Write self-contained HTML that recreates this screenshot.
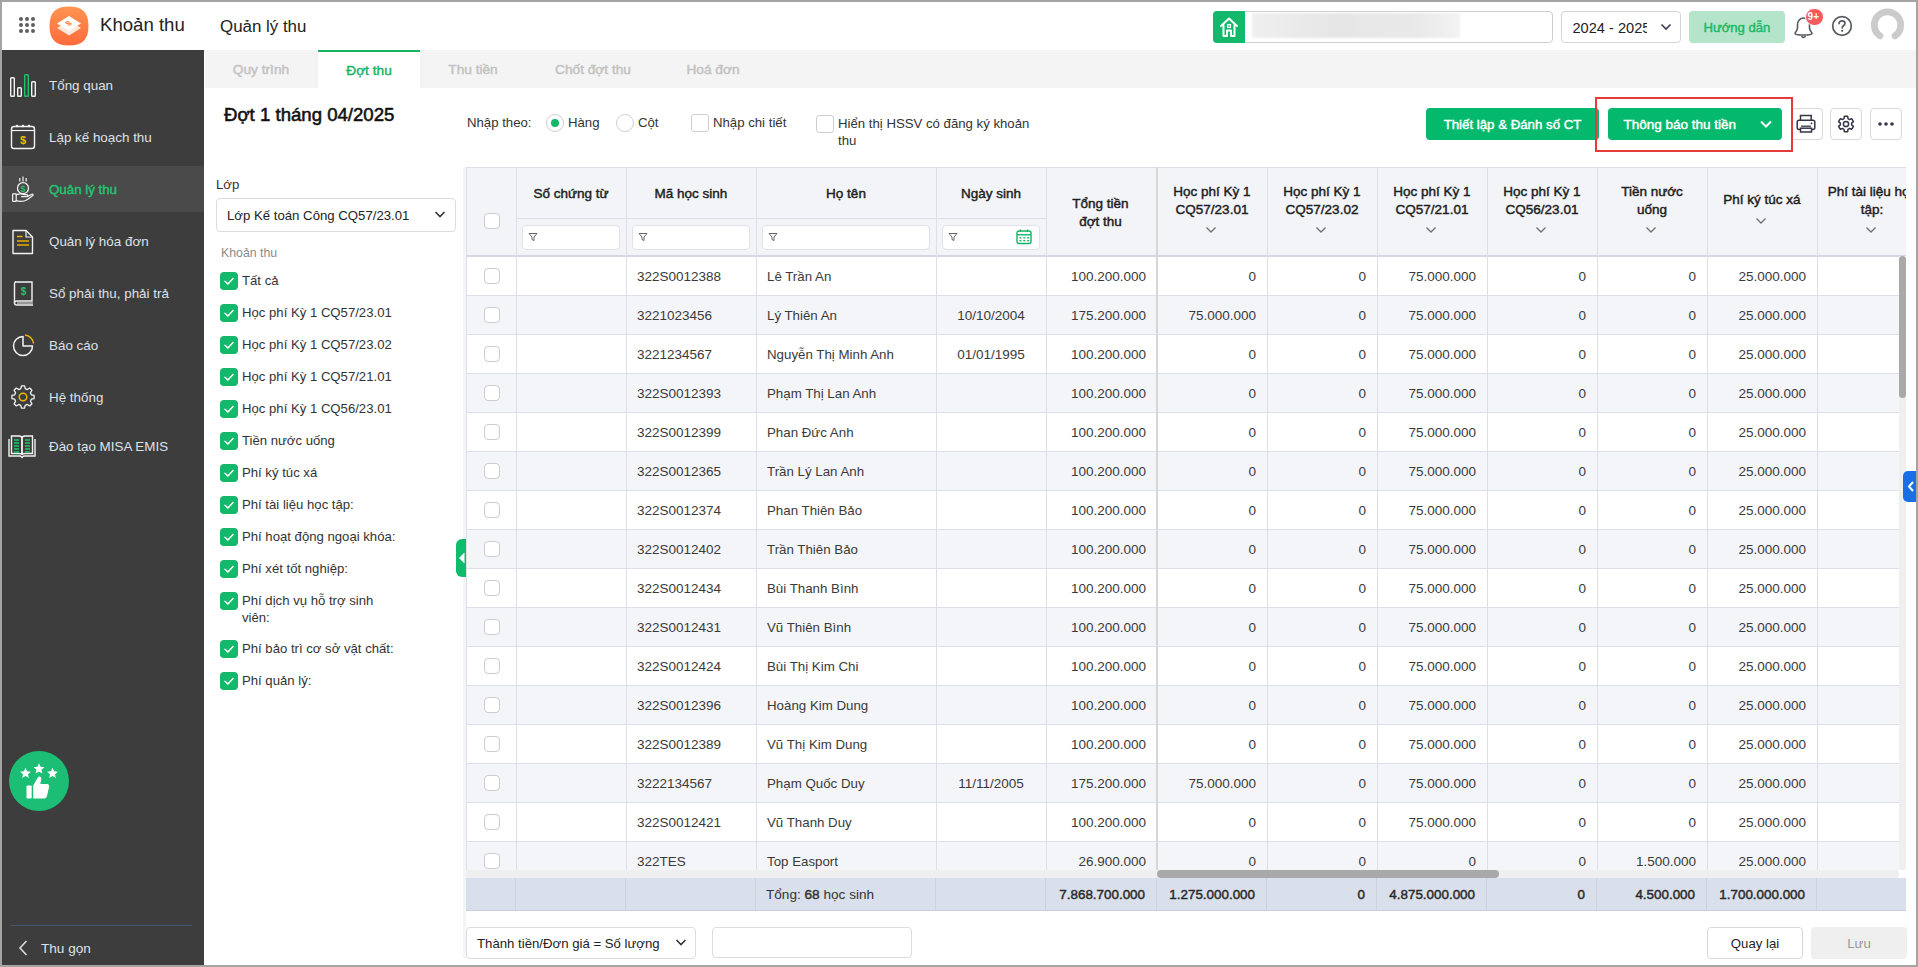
<!DOCTYPE html><html><head><meta charset="utf-8"><style>
*{box-sizing:border-box;margin:0;padding:0}
html,body{width:1918px;height:967px;overflow:hidden;background:#a4a4a4;font-family:"Liberation Sans",sans-serif;color:#212121}
.abs{position:absolute}
.t{position:absolute;white-space:nowrap;line-height:1}
.sb{font-weight:normal!important;-webkit-text-stroke-width:0.45px}
#app{position:absolute;left:2px;top:2px;width:1914px;height:963px;background:#fff;overflow:hidden}
</style></head><body>
<div id="app"></div>
<div class="abs" style="left:19px;top:17px;width:4px;height:4px;border-radius:50%;background:#5f5f5f"></div>
<div class="abs" style="left:19px;top:23px;width:4px;height:4px;border-radius:50%;background:#5f5f5f"></div>
<div class="abs" style="left:19px;top:29px;width:4px;height:4px;border-radius:50%;background:#5f5f5f"></div>
<div class="abs" style="left:25px;top:17px;width:4px;height:4px;border-radius:50%;background:#5f5f5f"></div>
<div class="abs" style="left:25px;top:23px;width:4px;height:4px;border-radius:50%;background:#5f5f5f"></div>
<div class="abs" style="left:25px;top:29px;width:4px;height:4px;border-radius:50%;background:#5f5f5f"></div>
<div class="abs" style="left:31px;top:17px;width:4px;height:4px;border-radius:50%;background:#5f5f5f"></div>
<div class="abs" style="left:31px;top:23px;width:4px;height:4px;border-radius:50%;background:#5f5f5f"></div>
<div class="abs" style="left:31px;top:29px;width:4px;height:4px;border-radius:50%;background:#5f5f5f"></div>
<svg class="abs" style="left:49px;top:6px" width="40" height="40" viewBox="0 0 40 40"><defs><linearGradient id="lg" x1="0" y1="0" x2="0" y2="1"><stop offset="0" stop-color="#ff9450"/><stop offset="1" stop-color="#ff6a3c"/></linearGradient></defs><path d="M20 0.5 C33 0.5 39.5 6 39.5 20 C39.5 34 33 39.5 20 39.5 C7 39.5 0.5 34 0.5 20 C0.5 6 7 0.5 20 0.5 Z" fill="url(#lg)"/><path d="M20 14.6 L32 22.1 L20 29.6 L8 22.1 Z" fill="#fde9dc"/><path d="M20 10 L32 17.4 L20 24.8 L8 17.4 Z" fill="#fff"/><g transform="translate(19.5 17.3) scale(1 0.62) rotate(-30)"><text x="0" y="3.5" font-size="10" font-weight="bold" fill="#ff7d33" text-anchor="middle" font-family="Liberation Sans">$</text></g></svg>
<div class="t" style="left:100px;top:15.5px;font-size:18.6px;color:#222">Khoản thu</div>
<div class="t" style="left:220px;top:18.5px;font-size:16.9px;color:#222">Quản lý thu</div>
<div class="abs" style="left:204px;top:50px;width:1712px;height:2px;background:linear-gradient(#e6e6e6,#f4f4f4)"></div>
<div class="abs" style="left:1213px;top:11px;width:340px;height:32px;border:1px solid #cfcfcf;border-radius:4px;background:#fff"></div>
<div class="abs" style="left:1213px;top:11px;width:32px;height:32px;background:#13b86a;border-radius:4px 0 0 4px"></div>
<svg class="abs" style="left:1219px;top:16px" width="20" height="22" viewBox="0 0 20 22"><path d="M2 10 L10 2.5 L18 10" fill="none" stroke="#fff" stroke-width="2" stroke-linecap="round" stroke-linejoin="round"/><path d="M4.5 8.5 V20 H8 V14.5 H12 V20 H15.5 V8.5" fill="none" stroke="#fff" stroke-width="2" stroke-linejoin="round"/><rect x="8.6" y="8.6" width="2.8" height="2.8" fill="none" stroke="#fff" stroke-width="1.3"/></svg>
<div class="abs" style="left:1252px;top:13px;width:208px;height:25px;background:linear-gradient(90deg,#efefef,#e6e6e6 40%,#e9e9e9 80%,#f3f3f3);filter:blur(1px)"></div>
<div class="abs" style="left:1561px;top:11px;width:120px;height:32px;border:1px solid #d4d4d4;border-radius:4px;background:#fff;overflow:hidden"><div class="t" style="left:10.5px;top:8.5px;font-size:14.6px;color:#222;width:74px;overflow:hidden">2024 - 2025</div></div>
<svg class="abs" style="left:1660px;top:23px" width="12" height="8" viewBox="0 0 12 8"><path d="M1.5 1.5 L6 6 L10.5 1.5" fill="none" stroke="#3a3a58" stroke-width="1.6"/></svg>
<div class="abs" style="left:1689px;top:11px;width:96px;height:32px;border-radius:4px;background:#b4e4c9"></div>
<div class="t sb" style="left:1703.5px;top:20.5px;font-size:13.1px;color:#1db86a">Hướng dẫn</div>
<svg class="abs" style="left:1792px;top:14px" width="24" height="26" viewBox="0 0 24 26"><path d="M3 19.5 C3 18 5.5 17 5.5 14 V11 C5.5 7 8 4 11.5 4 C15 4 17.5 7 17.5 11 V14 C17.5 17 20 18 20 19.5 C20 20.5 18 21 11.5 21 C5 21 3 20.5 3 19.5 Z" fill="none" stroke="#555a60" stroke-width="1.6" stroke-linejoin="round"/><path d="M9.5 22.3 C10.5 23.8 12.5 23.8 13.5 22.3" fill="none" stroke="#555a60" stroke-width="1.6"/></svg>
<div class="abs" style="left:1805px;top:7.5px;width:18.5px;height:18.5px;border-radius:50%;background:#f45a5a;border:1.6px solid #fff"></div>
<div class="t" style="left:1807.6px;top:12px;font-size:10px;font-weight:bold;color:#fff">9+</div>
<svg class="abs" style="left:1831px;top:15px" width="22" height="22" viewBox="0 0 22 22"><circle cx="11" cy="11" r="9.3" fill="none" stroke="#555a60" stroke-width="1.7"/><path d="M8 8.6 C8 6.8 9.3 5.8 11 5.8 C12.7 5.8 14 6.9 14 8.4 C14 10.4 11.2 10.6 11.2 12.8" fill="none" stroke="#555a60" stroke-width="1.7" stroke-linecap="round"/><circle cx="11.2" cy="15.8" r="1.1" fill="#555a60"/></svg>
<svg class="abs" style="left:1869px;top:8px" width="38" height="36" viewBox="0 0 38 36"><path d="M10.93 27.81 A13.2 13.2 0 1 1 26.07 27.81" fill="none" stroke="#cbcbcb" stroke-width="6.8" stroke-linecap="round"/></svg>
<div class="abs" style="left:2px;top:50px;width:202px;height:915px;background:#3d3d3d"></div>
<div class="abs" style="left:2px;top:166px;width:202px;height:46px;background:#4a4a4a"></div>
<div class="t" style="left:49px;top:78.5px;font-size:13.4px;color:#dde1e8">Tổng quan</div>
<div class="t" style="left:49px;top:130.5px;font-size:13.4px;color:#dde1e8">Lập kế hoạch thu</div>
<div class="t sb" style="left:49px;top:182.5px;font-size:13.3px;color:#22c46f">Quản lý thu</div>
<div class="t" style="left:49px;top:234.5px;font-size:13.4px;color:#dde1e8">Quản lý hóa đơn</div>
<div class="t" style="left:49px;top:286.5px;font-size:13.4px;color:#dde1e8">Sổ phải thu, phải trả</div>
<div class="t" style="left:49px;top:338.5px;font-size:13.4px;color:#dde1e8">Báo cáo</div>
<div class="t" style="left:49px;top:390.5px;font-size:13.4px;color:#dde1e8">Hệ thống</div>
<div class="t" style="left:49px;top:439.5px;font-size:13.4px;color:#dde1e8">Đào tạo MISA EMIS</div>
<svg class="abs" style="left:8px;top:72px" width="30" height="26" viewBox="0 0 30 26"><rect x="2.7" y="5.7" width="3.6" height="18.6" rx="0.8" fill="none" stroke="#f2f2f2" stroke-width="1.4"/><rect x="9.7" y="15.7" width="3.6" height="8.6" rx="0.8" fill="none" stroke="#f2f2f2" stroke-width="1.4"/><rect x="16.7" y="2.7" width="3.6" height="21.6" rx="0.8" fill="none" stroke="#1fc16b" stroke-width="1.4"/><rect x="23.7" y="9.7" width="3.6" height="14.6" rx="0.8" fill="none" stroke="#f2f2f2" stroke-width="1.4"/></svg>
<svg class="abs" style="left:9px;top:123px" width="28" height="28" viewBox="0 0 28 28"><rect x="2.5" y="3.5" width="23" height="22" rx="2.5" fill="none" stroke="#f2f2f2" stroke-width="1.4"/><line x1="2.5" y1="7.5" x2="25.5" y2="7.5" stroke="#f2f2f2" stroke-width="1.2"/><circle cx="8" cy="3" r="1.3" fill="#f2f2f2"/><circle cx="14" cy="3" r="1.3" fill="#f2f2f2"/><circle cx="20" cy="3" r="1.3" fill="#f2f2f2"/><text x="14" y="21" font-size="11" font-weight="bold" fill="#f2b600" text-anchor="middle" font-family="Liberation Sans">$</text></svg>
<svg class="abs" style="left:10px;top:173px" width="26" height="32" viewBox="0 0 26 32"><line x1="13" y1="3.5" x2="13" y2="8.5" stroke="#f2f2f2" stroke-width="1.2"/><line x1="9.8" y1="5" x2="9.8" y2="8.5" stroke="#f2f2f2" stroke-width="1.2"/><line x1="16.2" y1="5" x2="16.2" y2="8.5" stroke="#f2f2f2" stroke-width="1.2"/><circle cx="13" cy="15.2" r="5.5" fill="none" stroke="#f2f2f2" stroke-width="1.3"/><text x="13" y="18.6" font-size="9" font-weight="bold" fill="#1fc16b" text-anchor="middle" font-family="Liberation Sans">$</text><rect x="2.6" y="20.8" width="3.6" height="7.6" rx="0.6" fill="none" stroke="#f2f2f2" stroke-width="1.2"/><path d="M6.2 21.6 C9 20.6 12 20.6 14.5 21.6 H17 C18 21.6 18 23.6 17 23.6 H11.5 M6.2 27.6 C10 28.8 14 28.6 17.5 26.4 L22.8 22.6 C23.6 22 23 20.8 22 21.2 L17 23.6" fill="none" stroke="#f2f2f2" stroke-width="1.2" stroke-linejoin="round" stroke-linecap="round"/></svg>
<svg class="abs" style="left:10px;top:228px" width="26" height="28" viewBox="0 0 26 28"><path d="M3 2.5 H16 L22.5 9 V25.5 H3 Z" fill="none" stroke="#f2f2f2" stroke-width="1.4" stroke-linejoin="round"/><path d="M16 2.5 V9 H22.5" fill="none" stroke="#f2f2f2" stroke-width="1.2"/><line x1="7" y1="8.5" x2="12.5" y2="8.5" stroke="#f2b600" stroke-width="1.4"/><line x1="7" y1="13" x2="19" y2="13" stroke="#f2b600" stroke-width="1.4"/><line x1="7" y1="17" x2="19" y2="17" stroke="#f2b600" stroke-width="1.4"/></svg>
<svg class="abs" style="left:10px;top:279px" width="26" height="28" viewBox="0 0 26 28"><path d="M5 3 H22 V22 H7 C5.5 22 4.5 23 4.5 24 C4.5 25 5.5 26 7 26 H23" fill="none" stroke="#f2f2f2" stroke-width="1.4"/><path d="M4.5 24 V5 C4.5 4 5 3 6 3" fill="none" stroke="#f2f2f2" stroke-width="1.4"/><line x1="7" y1="24" x2="23" y2="24" stroke="#f2f2f2" stroke-width="1"/><text x="13.5" y="16" font-size="10" font-weight="bold" fill="#1fc16b" text-anchor="middle" font-family="Liberation Sans">$</text></svg>
<svg class="abs" style="left:11px;top:333px" width="26" height="26" viewBox="0 0 26 26"><path d="M12 3.5 A9.5 9.5 0 1 0 21.5 13 H12 Z" fill="none" stroke="#f2f2f2" stroke-width="1.5" stroke-linejoin="round"/><path d="M14 2 A9.5 9.5 0 0 1 22.5 10.5" fill="none" stroke="#f2b600" stroke-width="1.5"/></svg>
<svg class="abs" style="left:9px;top:383px" width="28" height="28" viewBox="0 0 28 28"><path d="M11.77 5.69 L12.44 2.91 L15.56 2.91 L16.23 5.69 L18.30 6.55 L20.74 5.06 L22.94 7.26 L21.45 9.70 L22.31 11.77 L25.09 12.44 L25.09 15.56 L22.31 16.23 L21.45 18.30 L22.94 20.74 L20.74 22.94 L18.30 21.45 L16.23 22.31 L15.56 25.09 L12.44 25.09 L11.77 22.31 L9.70 21.45 L7.26 22.94 L5.06 20.74 L6.55 18.30 L5.69 16.23 L2.91 15.56 L2.91 12.44 L5.69 11.77 L6.55 9.70 L5.06 7.26 L7.26 5.06 L9.70 6.55 Z" fill="none" stroke="#f2f2f2" stroke-width="1.3" stroke-linejoin="round"/><circle cx="14" cy="14" r="3.8" fill="none" stroke="#f2b600" stroke-width="1.5"/></svg>
<svg class="abs" style="left:7px;top:433px" width="30" height="26" viewBox="0 0 30 26"><path d="M2 6 V23 H13 C14 23 14.5 24 15 24.5 C15.5 24 16 23 17 23 H28 V6" fill="none" stroke="#f2f2f2" stroke-width="1.4"/><path d="M4.5 3 H12 C13.5 3 15 4 15 5.5 V22 C15 21 13.5 20.5 12 20.5 H4.5 Z" fill="none" stroke="#f2f2f2" stroke-width="1.4"/><path d="M25.5 3 H18 C16.5 3 15 4 15 5.5 V22 C15 21 16.5 20.5 18 20.5 H25.5 Z" fill="none" stroke="#f2f2f2" stroke-width="1.4"/><line x1="7" y1="7" x2="12" y2="7" stroke="#1fc16b" stroke-width="1.6"/><line x1="18" y1="7" x2="23" y2="7" stroke="#1fc16b" stroke-width="1.6"/><line x1="7" y1="10" x2="12" y2="10" stroke="#1fc16b" stroke-width="1.6"/><line x1="18" y1="10" x2="23" y2="10" stroke="#1fc16b" stroke-width="1.6"/><line x1="7" y1="13" x2="12" y2="13" stroke="#1fc16b" stroke-width="1.6"/><line x1="18" y1="13" x2="23" y2="13" stroke="#1fc16b" stroke-width="1.6"/><line x1="7" y1="16" x2="12" y2="16" stroke="#1fc16b" stroke-width="1.6"/><line x1="18" y1="16" x2="23" y2="16" stroke="#1fc16b" stroke-width="1.6"/><line x1="7" y1="19" x2="12" y2="19" stroke="#1fc16b" stroke-width="1.6"/><line x1="18" y1="19" x2="23" y2="19" stroke="#1fc16b" stroke-width="1.6"/></svg>
<div class="abs" style="left:9px;top:751px;width:60px;height:60px;border-radius:50%;background:#1cbd74"></div>
<svg class="abs" style="left:9px;top:751px" width="60" height="60" viewBox="0 0 60 60"><g transform="translate(16.5 21.5) scale(1.2) translate(-17 -17)"><path d="M17 13 L18.3 16 L21.5 16.3 L19.1 18.4 L19.8 21.5 L17 19.9 L14.2 21.5 L14.9 18.4 L12.5 16.3 L15.7 16 Z" fill="#fff"/></g><g transform="translate(30 17) scale(1.2) translate(-30 -12.5)"><path d="M30 8.5 L31.3 11.5 L34.5 11.8 L32.1 13.9 L32.8 17 L30 15.4 L27.2 17 L27.9 13.9 L25.5 11.8 L28.7 11.5 Z" fill="#fff"/></g><g transform="translate(43.5 21.5) scale(1.2) translate(-43 -17)"><path d="M43 13 L44.3 16 L47.5 16.3 L45.1 18.4 L45.8 21.5 L43 19.9 L40.2 21.5 L40.9 18.4 L38.5 16.3 L41.7 16 Z" fill="#fff"/></g><g transform="translate(0 2.5)"><rect x="17.5" y="32" width="5.2" height="13" rx="1" fill="#fff"/><path d="M24.2 32 L28.8 24 C29.8 22 32.8 23 32.3 25.8 L31.3 30.5 H38 C39.6 30.5 40.6 32 40.1 33.6 L38 42.5 C37.5 44 36.4 45 35.2 45 H24.2 Z" fill="#fff"/></g></svg>
<div class="abs" style="left:11px;top:925px;width:181px;height:1px;background:#46556a"></div>
<svg class="abs" style="left:17px;top:939px" width="12" height="18" viewBox="0 0 12 18"><path d="M9.5 2 L3 9 L9.5 16" fill="none" stroke="#d8dce4" stroke-width="1.6"/></svg>
<div class="t" style="left:41px;top:942px;font-size:13.6px;color:#dde1e8">Thu gọn</div>
<div class="abs" style="left:205px;top:50px;width:1711px;height:38px;background:#f4f4f4"></div>
<div class="abs" style="left:318px;top:50px;width:102px;height:38px;background:#fff;border-top:2px solid #17b365"></div>
<div class="t sb" style="left:201px;width:120px;text-align:center;top:62.5px;font-size:13.7px;color:#c2c2c2">Quy trình</div>
<div class="t sb" style="left:309px;width:120px;text-align:center;top:63.5px;font-size:13.7px;color:#18b466">Đợt thu</div>
<div class="t sb" style="left:413px;width:120px;text-align:center;top:62.5px;font-size:13.7px;color:#c2c2c2">Thu tiền</div>
<div class="t sb" style="left:533px;width:120px;text-align:center;top:62.5px;font-size:13.7px;color:#c2c2c2">Chốt đợt thu</div>
<div class="t sb" style="left:653px;width:120px;text-align:center;top:62.5px;font-size:13.7px;color:#c2c2c2">Hoá đơn</div>
<div class="t" style="left:224px;top:105.5px;font-size:18.6px;font-weight:normal;-webkit-text-stroke:0.55px #111;color:#111">Đợt 1 tháng 04/2025</div>
<div class="t" style="left:467px;top:116px;font-size:13.2px;color:#333">Nhập theo:</div>
<div class="abs" style="left:546px;top:114px;width:18px;height:18px;border:1px solid #cfcfcf;border-radius:50%;background:#fff"></div>
<div class="abs" style="left:551px;top:119px;width:8px;height:8px;border-radius:50%;background:#13b86a"></div>
<div class="t" style="left:568px;top:116px;font-size:13.2px;color:#333">Hàng</div>
<div class="abs" style="left:616px;top:114px;width:18px;height:18px;border:1px solid #cfcfcf;border-radius:50%;background:#fff"></div>
<div class="t" style="left:638px;top:116px;font-size:13.2px;color:#333">Cột</div>
<div class="abs" style="left:691px;top:114px;width:18px;height:18px;border:1px solid #cfcfcf;border-radius:3px;background:#fff"></div>
<div class="t" style="left:713px;top:116px;font-size:13.2px;color:#333">Nhập chi tiết</div>
<div class="abs" style="left:816px;top:115px;width:18px;height:18px;border:1px solid #cfcfcf;border-radius:3px;background:#fff"></div>
<div class="t" style="left:838px;top:115px;font-size:13.2px;color:#333;line-height:17px;white-space:normal;width:210px">Hiển thị HSSV có đăng ký khoản thu</div>
<div class="abs" style="left:1426px;top:108px;width:173px;height:32px;border-radius:4px;background:#04b96c"></div>
<div class="t sb" style="left:1426px;width:173px;text-align:center;top:118px;font-size:13.25px;color:#fff">Thiết lập &amp; Đánh số CT</div>
<div class="abs" style="left:1608px;top:108px;width:174px;height:32px;border-radius:4px;background:#04b96c"></div>
<div class="t sb" style="left:1623.5px;top:118px;font-size:13.5px;color:#fff">Thông báo thu tiền</div>
<svg class="abs" style="left:1759px;top:119px" width="14" height="10" viewBox="0 0 14 10"><path d="M2 2.5 L7 7.5 L12 2.5" fill="none" stroke="#fff" stroke-width="2"/></svg>
<div class="abs" style="left:1791px;top:108px;width:32px;height:32px;border:1px solid #d9d9d9;border-radius:4px;background:#fff"></div>
<div class="abs" style="left:1830px;top:108px;width:32px;height:32px;border:1px solid #d9d9d9;border-radius:4px;background:#fff"></div>
<div class="abs" style="left:1870px;top:108px;width:32px;height:32px;border:1px solid #d9d9d9;border-radius:4px;background:#fff"></div>
<svg class="abs" style="left:1795px;top:112px" width="24" height="24" viewBox="0 0 24 24"><path d="M5.5 8 V3.6 H16.2 V8" fill="none" stroke="#35354a" stroke-width="1.5"/><path d="M5 17.5 H4 C2.8 17.5 2.2 16.8 2.2 15.8 V10 C2.2 8.8 2.9 8.2 4 8.2 H18 C19.1 8.2 19.8 8.8 19.8 10 V15.8 C19.8 16.8 19.2 17.5 18 17.5 H17" fill="none" stroke="#35354a" stroke-width="1.5"/><rect x="5.5" y="16.2" width="11" height="3.8" fill="none" stroke="#35354a" stroke-width="1.5"/><line x1="6" y1="14.2" x2="16" y2="14.2" stroke="#35354a" stroke-width="1.3"/><path d="M16.5 10.2 L17.6 11.3 L16.5 12.4 L15.4 11.3 Z" fill="#35354a"/></svg>
<svg class="abs" style="left:1834px;top:112px" width="24" height="24" viewBox="0 0 24 24"><path d="M9.96 6.68 L10.38 4.37 L13.62 4.37 L14.04 6.68 L15.59 7.57 L17.80 6.78 L19.42 9.59 L17.63 11.11 L17.63 12.89 L19.42 14.41 L17.80 17.22 L15.59 16.43 L14.04 17.32 L13.62 19.63 L10.38 19.63 L9.96 17.32 L8.41 16.43 L6.20 17.22 L4.58 14.41 L6.37 12.89 L6.37 11.11 L4.58 9.59 L6.20 6.78 L8.41 7.57 Z" fill="none" stroke="#35354a" stroke-width="1.5" stroke-linejoin="round"/><circle cx="12" cy="12" r="2.6" fill="none" stroke="#35354a" stroke-width="1.5"/></svg>
<svg class="abs" style="left:1874px;top:112px" width="24" height="24" viewBox="0 0 24 24"><circle cx="6" cy="12" r="1.8" fill="#35354a"/><circle cx="12" cy="12" r="1.8" fill="#35354a"/><circle cx="18" cy="12" r="1.8" fill="#35354a"/></svg>
<div class="abs" style="left:1595px;top:97px;width:198px;height:55px;border:2px solid #e53a3a"></div>
<div class="t" style="left:216px;top:178px;font-size:13.2px;color:#333">Lớp</div>
<div class="abs" style="left:216px;top:198px;width:240px;height:34px;border:1px solid #dcdcdc;border-radius:4px;background:#fff"></div>
<div class="t" style="left:227px;top:208.5px;font-size:13.2px;color:#222">Lớp Kế toán Công CQ57/23.01</div>
<svg class="abs" style="left:434px;top:210px" width="12" height="9" viewBox="0 0 12 9"><path d="M1.5 2 L6 6.5 L10.5 2" fill="none" stroke="#333" stroke-width="1.6"/></svg>
<div class="t" style="left:221px;top:247px;font-size:12.3px;color:#8a8a8a">Khoản thu</div>
<div class="abs" style="left:220px;top:272px;width:18px;height:18px;border-radius:4px;background:#13b86a"></div>
<svg class="abs" style="left:220px;top:272px" width="18" height="18" viewBox="0 0 18 18"><path d="M5 9.3 L7.9 12 L13 6.6" fill="none" stroke="#fff" stroke-width="1.5" stroke-linecap="round" stroke-linejoin="round"/></svg>
<div class="t" style="left:242px;top:271.5px;font-size:13.15px;color:#333;line-height:17px">Tất cả</div>
<div class="abs" style="left:220px;top:304px;width:18px;height:18px;border-radius:4px;background:#13b86a"></div>
<svg class="abs" style="left:220px;top:304px" width="18" height="18" viewBox="0 0 18 18"><path d="M5 9.3 L7.9 12 L13 6.6" fill="none" stroke="#fff" stroke-width="1.5" stroke-linecap="round" stroke-linejoin="round"/></svg>
<div class="t" style="left:242px;top:303.5px;font-size:13.15px;color:#333;line-height:17px">Học phí Kỳ 1 CQ57/23.01</div>
<div class="abs" style="left:220px;top:336px;width:18px;height:18px;border-radius:4px;background:#13b86a"></div>
<svg class="abs" style="left:220px;top:336px" width="18" height="18" viewBox="0 0 18 18"><path d="M5 9.3 L7.9 12 L13 6.6" fill="none" stroke="#fff" stroke-width="1.5" stroke-linecap="round" stroke-linejoin="round"/></svg>
<div class="t" style="left:242px;top:335.5px;font-size:13.15px;color:#333;line-height:17px">Học phí Kỳ 1 CQ57/23.02</div>
<div class="abs" style="left:220px;top:368px;width:18px;height:18px;border-radius:4px;background:#13b86a"></div>
<svg class="abs" style="left:220px;top:368px" width="18" height="18" viewBox="0 0 18 18"><path d="M5 9.3 L7.9 12 L13 6.6" fill="none" stroke="#fff" stroke-width="1.5" stroke-linecap="round" stroke-linejoin="round"/></svg>
<div class="t" style="left:242px;top:367.5px;font-size:13.15px;color:#333;line-height:17px">Học phí Kỳ 1 CQ57/21.01</div>
<div class="abs" style="left:220px;top:400px;width:18px;height:18px;border-radius:4px;background:#13b86a"></div>
<svg class="abs" style="left:220px;top:400px" width="18" height="18" viewBox="0 0 18 18"><path d="M5 9.3 L7.9 12 L13 6.6" fill="none" stroke="#fff" stroke-width="1.5" stroke-linecap="round" stroke-linejoin="round"/></svg>
<div class="t" style="left:242px;top:399.5px;font-size:13.15px;color:#333;line-height:17px">Học phí Kỳ 1 CQ56/23.01</div>
<div class="abs" style="left:220px;top:432px;width:18px;height:18px;border-radius:4px;background:#13b86a"></div>
<svg class="abs" style="left:220px;top:432px" width="18" height="18" viewBox="0 0 18 18"><path d="M5 9.3 L7.9 12 L13 6.6" fill="none" stroke="#fff" stroke-width="1.5" stroke-linecap="round" stroke-linejoin="round"/></svg>
<div class="t" style="left:242px;top:431.5px;font-size:13.15px;color:#333;line-height:17px">Tiền nước uống</div>
<div class="abs" style="left:220px;top:464px;width:18px;height:18px;border-radius:4px;background:#13b86a"></div>
<svg class="abs" style="left:220px;top:464px" width="18" height="18" viewBox="0 0 18 18"><path d="M5 9.3 L7.9 12 L13 6.6" fill="none" stroke="#fff" stroke-width="1.5" stroke-linecap="round" stroke-linejoin="round"/></svg>
<div class="t" style="left:242px;top:463.5px;font-size:13.15px;color:#333;line-height:17px">Phí ký túc xá</div>
<div class="abs" style="left:220px;top:496px;width:18px;height:18px;border-radius:4px;background:#13b86a"></div>
<svg class="abs" style="left:220px;top:496px" width="18" height="18" viewBox="0 0 18 18"><path d="M5 9.3 L7.9 12 L13 6.6" fill="none" stroke="#fff" stroke-width="1.5" stroke-linecap="round" stroke-linejoin="round"/></svg>
<div class="t" style="left:242px;top:495.5px;font-size:13.15px;color:#333;line-height:17px">Phí tài liệu học tập:</div>
<div class="abs" style="left:220px;top:528px;width:18px;height:18px;border-radius:4px;background:#13b86a"></div>
<svg class="abs" style="left:220px;top:528px" width="18" height="18" viewBox="0 0 18 18"><path d="M5 9.3 L7.9 12 L13 6.6" fill="none" stroke="#fff" stroke-width="1.5" stroke-linecap="round" stroke-linejoin="round"/></svg>
<div class="t" style="left:242px;top:527.5px;font-size:13.15px;color:#333;line-height:17px">Phí hoạt động ngoại khóa:</div>
<div class="abs" style="left:220px;top:560px;width:18px;height:18px;border-radius:4px;background:#13b86a"></div>
<svg class="abs" style="left:220px;top:560px" width="18" height="18" viewBox="0 0 18 18"><path d="M5 9.3 L7.9 12 L13 6.6" fill="none" stroke="#fff" stroke-width="1.5" stroke-linecap="round" stroke-linejoin="round"/></svg>
<div class="t" style="left:242px;top:559.5px;font-size:13.15px;color:#333;line-height:17px">Phí xét tốt nghiệp:</div>
<div class="abs" style="left:220px;top:592px;width:18px;height:18px;border-radius:4px;background:#13b86a"></div>
<svg class="abs" style="left:220px;top:592px" width="18" height="18" viewBox="0 0 18 18"><path d="M5 9.3 L7.9 12 L13 6.6" fill="none" stroke="#fff" stroke-width="1.5" stroke-linecap="round" stroke-linejoin="round"/></svg>
<div class="t" style="left:242px;top:591.5px;font-size:13.15px;color:#333;line-height:17px">Phí dịch vụ hỗ trợ sinh<br>viên:</div>
<div class="abs" style="left:220px;top:640px;width:18px;height:18px;border-radius:4px;background:#13b86a"></div>
<svg class="abs" style="left:220px;top:640px" width="18" height="18" viewBox="0 0 18 18"><path d="M5 9.3 L7.9 12 L13 6.6" fill="none" stroke="#fff" stroke-width="1.5" stroke-linecap="round" stroke-linejoin="round"/></svg>
<div class="t" style="left:242px;top:639.5px;font-size:13.15px;color:#333;line-height:17px">Phí bảo trì cơ sở vật chất:</div>
<div class="abs" style="left:220px;top:672px;width:18px;height:18px;border-radius:4px;background:#13b86a"></div>
<svg class="abs" style="left:220px;top:672px" width="18" height="18" viewBox="0 0 18 18"><path d="M5 9.3 L7.9 12 L13 6.6" fill="none" stroke="#fff" stroke-width="1.5" stroke-linecap="round" stroke-linejoin="round"/></svg>
<div class="t" style="left:242px;top:671.5px;font-size:13.15px;color:#333;line-height:17px">Phí quản lý:</div>
<div class="abs" style="left:463px;top:167px;width:3px;height:791px;background:#f4f5f9"></div>
<div class="abs" style="left:456px;top:539px;width:10px;height:38px;border-radius:6px 0 0 6px;background:#0fbc6b"></div>
<svg class="abs" style="left:456px;top:539px" width="10" height="38" viewBox="0 0 10 38"><path d="M8.5 13.5 L3 19 L8.5 24.5 Z" fill="#fff"/></svg>
<div class="abs" style="left:466px;top:167px;width:1440px;height:744px;overflow:hidden;background:#fff" id="tbl">
<div class="abs" style="left:0;top:0;width:1440px;height:89px;background:#f3f4f8;border-top:1px solid #dcdfea"></div>
<div class="abs" style="left:50px;top:51px;width:530px;height:1px;background:#dcdfea"></div>
<div class="abs" style="left:0;top:88px;width:1440px;height:2px;background:#d4d7e2"></div>
<div class="abs" style="left:0;top:90px;width:1440px;height:38px;background:#fff"></div>
<div class="abs" style="left:0;top:128px;width:1440px;height:1px;background:#dcdfea"></div>
<div class="abs" style="left:0;top:129px;width:1440px;height:38px;background:#f4f5f9"></div>
<div class="abs" style="left:0;top:167px;width:1440px;height:1px;background:#dcdfea"></div>
<div class="abs" style="left:0;top:168px;width:1440px;height:38px;background:#fff"></div>
<div class="abs" style="left:0;top:206px;width:1440px;height:1px;background:#dcdfea"></div>
<div class="abs" style="left:0;top:207px;width:1440px;height:38px;background:#f4f5f9"></div>
<div class="abs" style="left:0;top:245px;width:1440px;height:1px;background:#dcdfea"></div>
<div class="abs" style="left:0;top:246px;width:1440px;height:38px;background:#fff"></div>
<div class="abs" style="left:0;top:284px;width:1440px;height:1px;background:#dcdfea"></div>
<div class="abs" style="left:0;top:285px;width:1440px;height:38px;background:#f4f5f9"></div>
<div class="abs" style="left:0;top:323px;width:1440px;height:1px;background:#dcdfea"></div>
<div class="abs" style="left:0;top:324px;width:1440px;height:38px;background:#fff"></div>
<div class="abs" style="left:0;top:362px;width:1440px;height:1px;background:#dcdfea"></div>
<div class="abs" style="left:0;top:363px;width:1440px;height:38px;background:#f4f5f9"></div>
<div class="abs" style="left:0;top:401px;width:1440px;height:1px;background:#dcdfea"></div>
<div class="abs" style="left:0;top:402px;width:1440px;height:38px;background:#fff"></div>
<div class="abs" style="left:0;top:440px;width:1440px;height:1px;background:#dcdfea"></div>
<div class="abs" style="left:0;top:441px;width:1440px;height:38px;background:#f4f5f9"></div>
<div class="abs" style="left:0;top:479px;width:1440px;height:1px;background:#dcdfea"></div>
<div class="abs" style="left:0;top:480px;width:1440px;height:38px;background:#fff"></div>
<div class="abs" style="left:0;top:518px;width:1440px;height:1px;background:#dcdfea"></div>
<div class="abs" style="left:0;top:519px;width:1440px;height:38px;background:#f4f5f9"></div>
<div class="abs" style="left:0;top:557px;width:1440px;height:1px;background:#dcdfea"></div>
<div class="abs" style="left:0;top:558px;width:1440px;height:38px;background:#fff"></div>
<div class="abs" style="left:0;top:596px;width:1440px;height:1px;background:#dcdfea"></div>
<div class="abs" style="left:0;top:597px;width:1440px;height:38px;background:#f4f5f9"></div>
<div class="abs" style="left:0;top:635px;width:1440px;height:1px;background:#dcdfea"></div>
<div class="abs" style="left:0;top:636px;width:1440px;height:38px;background:#fff"></div>
<div class="abs" style="left:0;top:674px;width:1440px;height:1px;background:#dcdfea"></div>
<div class="abs" style="left:0;top:675px;width:1440px;height:38px;background:#f4f5f9"></div>
<div class="abs" style="left:0;top:713px;width:1440px;height:1px;background:#dcdfea"></div>
<div class="abs" style="left:50px;top:0;width:1px;height:711px;background:#dcdfea"></div>
<div class="abs" style="left:160px;top:0;width:1px;height:711px;background:#dcdfea"></div>
<div class="abs" style="left:290px;top:0;width:1px;height:711px;background:#dcdfea"></div>
<div class="abs" style="left:470px;top:0;width:1px;height:711px;background:#dcdfea"></div>
<div class="abs" style="left:580px;top:0;width:1px;height:711px;background:#dcdfea"></div>
<div class="abs" style="left:690px;top:0;width:2px;height:711px;background:#d6d6d6"></div>
<div class="abs" style="left:801px;top:0;width:1px;height:711px;background:#dcdfea"></div>
<div class="abs" style="left:911px;top:0;width:1px;height:711px;background:#dcdfea"></div>
<div class="abs" style="left:1021px;top:0;width:1px;height:711px;background:#dcdfea"></div>
<div class="abs" style="left:1131px;top:0;width:1px;height:711px;background:#dcdfea"></div>
<div class="abs" style="left:1241px;top:0;width:1px;height:711px;background:#dcdfea"></div>
<div class="abs" style="left:1351px;top:0;width:1px;height:711px;background:#dcdfea"></div>
<div class="abs" style="left:0;top:0;width:1px;height:744px;background:#dcdfea"></div>
<div class="abs" style="left:18px;top:46px;width:16px;height:16px;border:1px solid #cdcdcd;border-radius:4px;background:#fff"></div>
<div class="t sb" style="left:50px;width:110px;text-align:center;top:19.5px;font-size:13.5px;color:#1e1e1e">Số chứng từ</div>
<div class="t sb" style="left:160px;width:130px;text-align:center;top:19.5px;font-size:13.5px;color:#1e1e1e">Mã học sinh</div>
<div class="t sb" style="left:290px;width:180px;text-align:center;top:19.5px;font-size:13.5px;color:#1e1e1e">Họ tên</div>
<div class="t sb" style="left:470px;width:110px;text-align:center;top:19.5px;font-size:13.5px;color:#1e1e1e">Ngày sinh</div>
<div class="t sb" style="left:579px;width:111px;text-align:center;top:29.5px;font-size:13.5px;color:#1e1e1e">Tổng tiền</div>
<div class="t sb" style="left:579px;width:111px;text-align:center;top:47.5px;font-size:13.5px;color:#1e1e1e">đợt thu</div>
<div class="t sb" style="left:691px;width:110px;text-align:center;top:17.5px;font-size:13.5px;color:#1e1e1e">Học phí Kỳ 1</div>
<div class="t sb" style="left:691px;width:110px;text-align:center;top:35.5px;font-size:13.5px;color:#1e1e1e">CQ57/23.01</div>
<div class="t sb" style="left:801px;width:110px;text-align:center;top:17.5px;font-size:13.5px;color:#1e1e1e">Học phí Kỳ 1</div>
<div class="t sb" style="left:801px;width:110px;text-align:center;top:35.5px;font-size:13.5px;color:#1e1e1e">CQ57/23.02</div>
<div class="t sb" style="left:911px;width:110px;text-align:center;top:17.5px;font-size:13.5px;color:#1e1e1e">Học phí Kỳ 1</div>
<div class="t sb" style="left:911px;width:110px;text-align:center;top:35.5px;font-size:13.5px;color:#1e1e1e">CQ57/21.01</div>
<div class="t sb" style="left:1021px;width:110px;text-align:center;top:17.5px;font-size:13.5px;color:#1e1e1e">Học phí Kỳ 1</div>
<div class="t sb" style="left:1021px;width:110px;text-align:center;top:35.5px;font-size:13.5px;color:#1e1e1e">CQ56/23.01</div>
<div class="t sb" style="left:1131px;width:110px;text-align:center;top:17.5px;font-size:13.5px;color:#1e1e1e">Tiền nước</div>
<div class="t sb" style="left:1131px;width:110px;text-align:center;top:35.5px;font-size:13.5px;color:#1e1e1e">uống</div>
<div class="t sb" style="left:1241px;width:110px;text-align:center;top:26.0px;font-size:13.5px;color:#1e1e1e">Phí ký túc xá</div>
<div class="t sb" style="left:1351px;width:110px;text-align:center;top:17.5px;font-size:13.5px;color:#1e1e1e">Phí tài liệu học</div>
<div class="t sb" style="left:1351px;width:110px;text-align:center;top:35.5px;font-size:13.5px;color:#1e1e1e">tập:</div>
<svg class="abs" style="left:739.0px;top:59px" width="12" height="8" viewBox="0 0 12 8"><path d="M1.5 1.5 L6 6 L10.5 1.5" fill="none" stroke="#707070" stroke-width="1.3"/></svg>
<svg class="abs" style="left:849.0px;top:59px" width="12" height="8" viewBox="0 0 12 8"><path d="M1.5 1.5 L6 6 L10.5 1.5" fill="none" stroke="#707070" stroke-width="1.3"/></svg>
<svg class="abs" style="left:959.0px;top:59px" width="12" height="8" viewBox="0 0 12 8"><path d="M1.5 1.5 L6 6 L10.5 1.5" fill="none" stroke="#707070" stroke-width="1.3"/></svg>
<svg class="abs" style="left:1069.0px;top:59px" width="12" height="8" viewBox="0 0 12 8"><path d="M1.5 1.5 L6 6 L10.5 1.5" fill="none" stroke="#707070" stroke-width="1.3"/></svg>
<svg class="abs" style="left:1179.0px;top:59px" width="12" height="8" viewBox="0 0 12 8"><path d="M1.5 1.5 L6 6 L10.5 1.5" fill="none" stroke="#707070" stroke-width="1.3"/></svg>
<svg class="abs" style="left:1289.0px;top:49.5px" width="12" height="8" viewBox="0 0 12 8"><path d="M1.5 1.5 L6 6 L10.5 1.5" fill="none" stroke="#707070" stroke-width="1.3"/></svg>
<svg class="abs" style="left:1399.0px;top:59px" width="12" height="8" viewBox="0 0 12 8"><path d="M1.5 1.5 L6 6 L10.5 1.5" fill="none" stroke="#707070" stroke-width="1.3"/></svg>
<div class="abs" style="left:56px;top:58px;width:98px;height:25px;border:1px solid #e0e2e8;border-radius:4px;background:#fff"></div>
<svg class="abs" style="left:62px;top:65px" width="10" height="10" viewBox="0 0 10 10"><path d="M1 1.5 H9 L6 5 V8.5 L4 7.5 V5 Z" fill="none" stroke="#666" stroke-width="1"/></svg>
<div class="abs" style="left:166px;top:58px;width:118px;height:25px;border:1px solid #e0e2e8;border-radius:4px;background:#fff"></div>
<svg class="abs" style="left:172px;top:65px" width="10" height="10" viewBox="0 0 10 10"><path d="M1 1.5 H9 L6 5 V8.5 L4 7.5 V5 Z" fill="none" stroke="#666" stroke-width="1"/></svg>
<div class="abs" style="left:296px;top:58px;width:168px;height:25px;border:1px solid #e0e2e8;border-radius:4px;background:#fff"></div>
<svg class="abs" style="left:302px;top:65px" width="10" height="10" viewBox="0 0 10 10"><path d="M1 1.5 H9 L6 5 V8.5 L4 7.5 V5 Z" fill="none" stroke="#666" stroke-width="1"/></svg>
<div class="abs" style="left:476px;top:58px;width:98px;height:25px;border:1px solid #e0e2e8;border-radius:4px;background:#fff"></div>
<svg class="abs" style="left:482px;top:65px" width="10" height="10" viewBox="0 0 10 10"><path d="M1 1.5 H9 L6 5 V8.5 L4 7.5 V5 Z" fill="none" stroke="#666" stroke-width="1"/></svg>
<svg class="abs" style="left:549px;top:61px" width="18" height="18" viewBox="0 0 18 18"><rect x="2" y="3" width="14" height="12.5" rx="2" fill="none" stroke="#17b365" stroke-width="1.4"/><line x1="2" y1="6.8" x2="16" y2="6.8" stroke="#17b365" stroke-width="1.4"/><line x1="5.5" y1="1.5" x2="5.5" y2="4" stroke="#17b365" stroke-width="1.4"/><line x1="12.5" y1="1.5" x2="12.5" y2="4" stroke="#17b365" stroke-width="1.4"/><rect x="4.4" y="9.2" width="2" height="1.3" fill="#17b365"/><rect x="4.4" y="12.0" width="2" height="1.3" fill="#17b365"/><rect x="8.3" y="9.2" width="2" height="1.3" fill="#17b365"/><rect x="8.3" y="12.0" width="2" height="1.3" fill="#17b365"/><rect x="12.2" y="9.2" width="2" height="1.3" fill="#17b365"/><rect x="12.2" y="12.0" width="2" height="1.3" fill="#17b365"/></svg>
<div class="abs" style="left:18px;top:101px;width:16px;height:16px;border:1px solid #cdcdcd;border-radius:4px;background:#fff"></div>
<div class="t" style="left:171px;top:103px;font-size:13.5px;color:#3a3a3a">322S0012388</div>
<div class="t" style="left:301px;top:103px;font-size:13.3px;color:#3a3a3a">Lê Trần An</div>
<div class="t" style="left:531px;width:149px;text-align:right;top:103px;font-size:13.5px;color:#3a3a3a">100.200.000</div>
<div class="t" style="left:641px;width:149px;text-align:right;top:103px;font-size:13.5px;color:#3a3a3a">0</div>
<div class="t" style="left:751px;width:149px;text-align:right;top:103px;font-size:13.5px;color:#3a3a3a">0</div>
<div class="t" style="left:861px;width:149px;text-align:right;top:103px;font-size:13.5px;color:#3a3a3a">75.000.000</div>
<div class="t" style="left:971px;width:149px;text-align:right;top:103px;font-size:13.5px;color:#3a3a3a">0</div>
<div class="t" style="left:1081px;width:149px;text-align:right;top:103px;font-size:13.5px;color:#3a3a3a">0</div>
<div class="t" style="left:1191px;width:149px;text-align:right;top:103px;font-size:13.5px;color:#3a3a3a">25.000.000</div>
<div class="abs" style="left:18px;top:140px;width:16px;height:16px;border:1px solid #cdcdcd;border-radius:4px;background:#fff"></div>
<div class="t" style="left:171px;top:142px;font-size:13.5px;color:#3a3a3a">3221023456</div>
<div class="t" style="left:301px;top:142px;font-size:13.3px;color:#3a3a3a">Lý Thiên An</div>
<div class="t" style="left:470px;width:110px;text-align:center;top:142px;font-size:13.5px;color:#3a3a3a">10/10/2004</div>
<div class="t" style="left:531px;width:149px;text-align:right;top:142px;font-size:13.5px;color:#3a3a3a">175.200.000</div>
<div class="t" style="left:641px;width:149px;text-align:right;top:142px;font-size:13.5px;color:#3a3a3a">75.000.000</div>
<div class="t" style="left:751px;width:149px;text-align:right;top:142px;font-size:13.5px;color:#3a3a3a">0</div>
<div class="t" style="left:861px;width:149px;text-align:right;top:142px;font-size:13.5px;color:#3a3a3a">75.000.000</div>
<div class="t" style="left:971px;width:149px;text-align:right;top:142px;font-size:13.5px;color:#3a3a3a">0</div>
<div class="t" style="left:1081px;width:149px;text-align:right;top:142px;font-size:13.5px;color:#3a3a3a">0</div>
<div class="t" style="left:1191px;width:149px;text-align:right;top:142px;font-size:13.5px;color:#3a3a3a">25.000.000</div>
<div class="abs" style="left:18px;top:179px;width:16px;height:16px;border:1px solid #cdcdcd;border-radius:4px;background:#fff"></div>
<div class="t" style="left:171px;top:181px;font-size:13.5px;color:#3a3a3a">3221234567</div>
<div class="t" style="left:301px;top:181px;font-size:13.3px;color:#3a3a3a">Nguyễn Thị Minh Anh</div>
<div class="t" style="left:470px;width:110px;text-align:center;top:181px;font-size:13.5px;color:#3a3a3a">01/01/1995</div>
<div class="t" style="left:531px;width:149px;text-align:right;top:181px;font-size:13.5px;color:#3a3a3a">100.200.000</div>
<div class="t" style="left:641px;width:149px;text-align:right;top:181px;font-size:13.5px;color:#3a3a3a">0</div>
<div class="t" style="left:751px;width:149px;text-align:right;top:181px;font-size:13.5px;color:#3a3a3a">0</div>
<div class="t" style="left:861px;width:149px;text-align:right;top:181px;font-size:13.5px;color:#3a3a3a">75.000.000</div>
<div class="t" style="left:971px;width:149px;text-align:right;top:181px;font-size:13.5px;color:#3a3a3a">0</div>
<div class="t" style="left:1081px;width:149px;text-align:right;top:181px;font-size:13.5px;color:#3a3a3a">0</div>
<div class="t" style="left:1191px;width:149px;text-align:right;top:181px;font-size:13.5px;color:#3a3a3a">25.000.000</div>
<div class="abs" style="left:18px;top:218px;width:16px;height:16px;border:1px solid #cdcdcd;border-radius:4px;background:#fff"></div>
<div class="t" style="left:171px;top:220px;font-size:13.5px;color:#3a3a3a">322S0012393</div>
<div class="t" style="left:301px;top:220px;font-size:13.3px;color:#3a3a3a">Phạm Thị Lan Anh</div>
<div class="t" style="left:531px;width:149px;text-align:right;top:220px;font-size:13.5px;color:#3a3a3a">100.200.000</div>
<div class="t" style="left:641px;width:149px;text-align:right;top:220px;font-size:13.5px;color:#3a3a3a">0</div>
<div class="t" style="left:751px;width:149px;text-align:right;top:220px;font-size:13.5px;color:#3a3a3a">0</div>
<div class="t" style="left:861px;width:149px;text-align:right;top:220px;font-size:13.5px;color:#3a3a3a">75.000.000</div>
<div class="t" style="left:971px;width:149px;text-align:right;top:220px;font-size:13.5px;color:#3a3a3a">0</div>
<div class="t" style="left:1081px;width:149px;text-align:right;top:220px;font-size:13.5px;color:#3a3a3a">0</div>
<div class="t" style="left:1191px;width:149px;text-align:right;top:220px;font-size:13.5px;color:#3a3a3a">25.000.000</div>
<div class="abs" style="left:18px;top:257px;width:16px;height:16px;border:1px solid #cdcdcd;border-radius:4px;background:#fff"></div>
<div class="t" style="left:171px;top:259px;font-size:13.5px;color:#3a3a3a">322S0012399</div>
<div class="t" style="left:301px;top:259px;font-size:13.3px;color:#3a3a3a">Phan Đức Anh</div>
<div class="t" style="left:531px;width:149px;text-align:right;top:259px;font-size:13.5px;color:#3a3a3a">100.200.000</div>
<div class="t" style="left:641px;width:149px;text-align:right;top:259px;font-size:13.5px;color:#3a3a3a">0</div>
<div class="t" style="left:751px;width:149px;text-align:right;top:259px;font-size:13.5px;color:#3a3a3a">0</div>
<div class="t" style="left:861px;width:149px;text-align:right;top:259px;font-size:13.5px;color:#3a3a3a">75.000.000</div>
<div class="t" style="left:971px;width:149px;text-align:right;top:259px;font-size:13.5px;color:#3a3a3a">0</div>
<div class="t" style="left:1081px;width:149px;text-align:right;top:259px;font-size:13.5px;color:#3a3a3a">0</div>
<div class="t" style="left:1191px;width:149px;text-align:right;top:259px;font-size:13.5px;color:#3a3a3a">25.000.000</div>
<div class="abs" style="left:18px;top:296px;width:16px;height:16px;border:1px solid #cdcdcd;border-radius:4px;background:#fff"></div>
<div class="t" style="left:171px;top:298px;font-size:13.5px;color:#3a3a3a">322S0012365</div>
<div class="t" style="left:301px;top:298px;font-size:13.3px;color:#3a3a3a">Trần Lý Lan Anh</div>
<div class="t" style="left:531px;width:149px;text-align:right;top:298px;font-size:13.5px;color:#3a3a3a">100.200.000</div>
<div class="t" style="left:641px;width:149px;text-align:right;top:298px;font-size:13.5px;color:#3a3a3a">0</div>
<div class="t" style="left:751px;width:149px;text-align:right;top:298px;font-size:13.5px;color:#3a3a3a">0</div>
<div class="t" style="left:861px;width:149px;text-align:right;top:298px;font-size:13.5px;color:#3a3a3a">75.000.000</div>
<div class="t" style="left:971px;width:149px;text-align:right;top:298px;font-size:13.5px;color:#3a3a3a">0</div>
<div class="t" style="left:1081px;width:149px;text-align:right;top:298px;font-size:13.5px;color:#3a3a3a">0</div>
<div class="t" style="left:1191px;width:149px;text-align:right;top:298px;font-size:13.5px;color:#3a3a3a">25.000.000</div>
<div class="abs" style="left:18px;top:335px;width:16px;height:16px;border:1px solid #cdcdcd;border-radius:4px;background:#fff"></div>
<div class="t" style="left:171px;top:337px;font-size:13.5px;color:#3a3a3a">322S0012374</div>
<div class="t" style="left:301px;top:337px;font-size:13.3px;color:#3a3a3a">Phan Thiên Bảo</div>
<div class="t" style="left:531px;width:149px;text-align:right;top:337px;font-size:13.5px;color:#3a3a3a">100.200.000</div>
<div class="t" style="left:641px;width:149px;text-align:right;top:337px;font-size:13.5px;color:#3a3a3a">0</div>
<div class="t" style="left:751px;width:149px;text-align:right;top:337px;font-size:13.5px;color:#3a3a3a">0</div>
<div class="t" style="left:861px;width:149px;text-align:right;top:337px;font-size:13.5px;color:#3a3a3a">75.000.000</div>
<div class="t" style="left:971px;width:149px;text-align:right;top:337px;font-size:13.5px;color:#3a3a3a">0</div>
<div class="t" style="left:1081px;width:149px;text-align:right;top:337px;font-size:13.5px;color:#3a3a3a">0</div>
<div class="t" style="left:1191px;width:149px;text-align:right;top:337px;font-size:13.5px;color:#3a3a3a">25.000.000</div>
<div class="abs" style="left:18px;top:374px;width:16px;height:16px;border:1px solid #cdcdcd;border-radius:4px;background:#fff"></div>
<div class="t" style="left:171px;top:376px;font-size:13.5px;color:#3a3a3a">322S0012402</div>
<div class="t" style="left:301px;top:376px;font-size:13.3px;color:#3a3a3a">Trần Thiên Bảo</div>
<div class="t" style="left:531px;width:149px;text-align:right;top:376px;font-size:13.5px;color:#3a3a3a">100.200.000</div>
<div class="t" style="left:641px;width:149px;text-align:right;top:376px;font-size:13.5px;color:#3a3a3a">0</div>
<div class="t" style="left:751px;width:149px;text-align:right;top:376px;font-size:13.5px;color:#3a3a3a">0</div>
<div class="t" style="left:861px;width:149px;text-align:right;top:376px;font-size:13.5px;color:#3a3a3a">75.000.000</div>
<div class="t" style="left:971px;width:149px;text-align:right;top:376px;font-size:13.5px;color:#3a3a3a">0</div>
<div class="t" style="left:1081px;width:149px;text-align:right;top:376px;font-size:13.5px;color:#3a3a3a">0</div>
<div class="t" style="left:1191px;width:149px;text-align:right;top:376px;font-size:13.5px;color:#3a3a3a">25.000.000</div>
<div class="abs" style="left:18px;top:413px;width:16px;height:16px;border:1px solid #cdcdcd;border-radius:4px;background:#fff"></div>
<div class="t" style="left:171px;top:415px;font-size:13.5px;color:#3a3a3a">322S0012434</div>
<div class="t" style="left:301px;top:415px;font-size:13.3px;color:#3a3a3a">Bùi Thanh Bình</div>
<div class="t" style="left:531px;width:149px;text-align:right;top:415px;font-size:13.5px;color:#3a3a3a">100.200.000</div>
<div class="t" style="left:641px;width:149px;text-align:right;top:415px;font-size:13.5px;color:#3a3a3a">0</div>
<div class="t" style="left:751px;width:149px;text-align:right;top:415px;font-size:13.5px;color:#3a3a3a">0</div>
<div class="t" style="left:861px;width:149px;text-align:right;top:415px;font-size:13.5px;color:#3a3a3a">75.000.000</div>
<div class="t" style="left:971px;width:149px;text-align:right;top:415px;font-size:13.5px;color:#3a3a3a">0</div>
<div class="t" style="left:1081px;width:149px;text-align:right;top:415px;font-size:13.5px;color:#3a3a3a">0</div>
<div class="t" style="left:1191px;width:149px;text-align:right;top:415px;font-size:13.5px;color:#3a3a3a">25.000.000</div>
<div class="abs" style="left:18px;top:452px;width:16px;height:16px;border:1px solid #cdcdcd;border-radius:4px;background:#fff"></div>
<div class="t" style="left:171px;top:454px;font-size:13.5px;color:#3a3a3a">322S0012431</div>
<div class="t" style="left:301px;top:454px;font-size:13.3px;color:#3a3a3a">Vũ Thiên Bình</div>
<div class="t" style="left:531px;width:149px;text-align:right;top:454px;font-size:13.5px;color:#3a3a3a">100.200.000</div>
<div class="t" style="left:641px;width:149px;text-align:right;top:454px;font-size:13.5px;color:#3a3a3a">0</div>
<div class="t" style="left:751px;width:149px;text-align:right;top:454px;font-size:13.5px;color:#3a3a3a">0</div>
<div class="t" style="left:861px;width:149px;text-align:right;top:454px;font-size:13.5px;color:#3a3a3a">75.000.000</div>
<div class="t" style="left:971px;width:149px;text-align:right;top:454px;font-size:13.5px;color:#3a3a3a">0</div>
<div class="t" style="left:1081px;width:149px;text-align:right;top:454px;font-size:13.5px;color:#3a3a3a">0</div>
<div class="t" style="left:1191px;width:149px;text-align:right;top:454px;font-size:13.5px;color:#3a3a3a">25.000.000</div>
<div class="abs" style="left:18px;top:491px;width:16px;height:16px;border:1px solid #cdcdcd;border-radius:4px;background:#fff"></div>
<div class="t" style="left:171px;top:493px;font-size:13.5px;color:#3a3a3a">322S0012424</div>
<div class="t" style="left:301px;top:493px;font-size:13.3px;color:#3a3a3a">Bùi Thị Kim Chi</div>
<div class="t" style="left:531px;width:149px;text-align:right;top:493px;font-size:13.5px;color:#3a3a3a">100.200.000</div>
<div class="t" style="left:641px;width:149px;text-align:right;top:493px;font-size:13.5px;color:#3a3a3a">0</div>
<div class="t" style="left:751px;width:149px;text-align:right;top:493px;font-size:13.5px;color:#3a3a3a">0</div>
<div class="t" style="left:861px;width:149px;text-align:right;top:493px;font-size:13.5px;color:#3a3a3a">75.000.000</div>
<div class="t" style="left:971px;width:149px;text-align:right;top:493px;font-size:13.5px;color:#3a3a3a">0</div>
<div class="t" style="left:1081px;width:149px;text-align:right;top:493px;font-size:13.5px;color:#3a3a3a">0</div>
<div class="t" style="left:1191px;width:149px;text-align:right;top:493px;font-size:13.5px;color:#3a3a3a">25.000.000</div>
<div class="abs" style="left:18px;top:530px;width:16px;height:16px;border:1px solid #cdcdcd;border-radius:4px;background:#fff"></div>
<div class="t" style="left:171px;top:532px;font-size:13.5px;color:#3a3a3a">322S0012396</div>
<div class="t" style="left:301px;top:532px;font-size:13.3px;color:#3a3a3a">Hoàng Kim Dung</div>
<div class="t" style="left:531px;width:149px;text-align:right;top:532px;font-size:13.5px;color:#3a3a3a">100.200.000</div>
<div class="t" style="left:641px;width:149px;text-align:right;top:532px;font-size:13.5px;color:#3a3a3a">0</div>
<div class="t" style="left:751px;width:149px;text-align:right;top:532px;font-size:13.5px;color:#3a3a3a">0</div>
<div class="t" style="left:861px;width:149px;text-align:right;top:532px;font-size:13.5px;color:#3a3a3a">75.000.000</div>
<div class="t" style="left:971px;width:149px;text-align:right;top:532px;font-size:13.5px;color:#3a3a3a">0</div>
<div class="t" style="left:1081px;width:149px;text-align:right;top:532px;font-size:13.5px;color:#3a3a3a">0</div>
<div class="t" style="left:1191px;width:149px;text-align:right;top:532px;font-size:13.5px;color:#3a3a3a">25.000.000</div>
<div class="abs" style="left:18px;top:569px;width:16px;height:16px;border:1px solid #cdcdcd;border-radius:4px;background:#fff"></div>
<div class="t" style="left:171px;top:571px;font-size:13.5px;color:#3a3a3a">322S0012389</div>
<div class="t" style="left:301px;top:571px;font-size:13.3px;color:#3a3a3a">Vũ Thị Kim Dung</div>
<div class="t" style="left:531px;width:149px;text-align:right;top:571px;font-size:13.5px;color:#3a3a3a">100.200.000</div>
<div class="t" style="left:641px;width:149px;text-align:right;top:571px;font-size:13.5px;color:#3a3a3a">0</div>
<div class="t" style="left:751px;width:149px;text-align:right;top:571px;font-size:13.5px;color:#3a3a3a">0</div>
<div class="t" style="left:861px;width:149px;text-align:right;top:571px;font-size:13.5px;color:#3a3a3a">75.000.000</div>
<div class="t" style="left:971px;width:149px;text-align:right;top:571px;font-size:13.5px;color:#3a3a3a">0</div>
<div class="t" style="left:1081px;width:149px;text-align:right;top:571px;font-size:13.5px;color:#3a3a3a">0</div>
<div class="t" style="left:1191px;width:149px;text-align:right;top:571px;font-size:13.5px;color:#3a3a3a">25.000.000</div>
<div class="abs" style="left:18px;top:608px;width:16px;height:16px;border:1px solid #cdcdcd;border-radius:4px;background:#fff"></div>
<div class="t" style="left:171px;top:610px;font-size:13.5px;color:#3a3a3a">3222134567</div>
<div class="t" style="left:301px;top:610px;font-size:13.3px;color:#3a3a3a">Phạm Quốc Duy</div>
<div class="t" style="left:470px;width:110px;text-align:center;top:610px;font-size:13.5px;color:#3a3a3a">11/11/2005</div>
<div class="t" style="left:531px;width:149px;text-align:right;top:610px;font-size:13.5px;color:#3a3a3a">175.200.000</div>
<div class="t" style="left:641px;width:149px;text-align:right;top:610px;font-size:13.5px;color:#3a3a3a">75.000.000</div>
<div class="t" style="left:751px;width:149px;text-align:right;top:610px;font-size:13.5px;color:#3a3a3a">0</div>
<div class="t" style="left:861px;width:149px;text-align:right;top:610px;font-size:13.5px;color:#3a3a3a">75.000.000</div>
<div class="t" style="left:971px;width:149px;text-align:right;top:610px;font-size:13.5px;color:#3a3a3a">0</div>
<div class="t" style="left:1081px;width:149px;text-align:right;top:610px;font-size:13.5px;color:#3a3a3a">0</div>
<div class="t" style="left:1191px;width:149px;text-align:right;top:610px;font-size:13.5px;color:#3a3a3a">25.000.000</div>
<div class="abs" style="left:18px;top:647px;width:16px;height:16px;border:1px solid #cdcdcd;border-radius:4px;background:#fff"></div>
<div class="t" style="left:171px;top:649px;font-size:13.5px;color:#3a3a3a">322S0012421</div>
<div class="t" style="left:301px;top:649px;font-size:13.3px;color:#3a3a3a">Vũ Thanh Duy</div>
<div class="t" style="left:531px;width:149px;text-align:right;top:649px;font-size:13.5px;color:#3a3a3a">100.200.000</div>
<div class="t" style="left:641px;width:149px;text-align:right;top:649px;font-size:13.5px;color:#3a3a3a">0</div>
<div class="t" style="left:751px;width:149px;text-align:right;top:649px;font-size:13.5px;color:#3a3a3a">0</div>
<div class="t" style="left:861px;width:149px;text-align:right;top:649px;font-size:13.5px;color:#3a3a3a">75.000.000</div>
<div class="t" style="left:971px;width:149px;text-align:right;top:649px;font-size:13.5px;color:#3a3a3a">0</div>
<div class="t" style="left:1081px;width:149px;text-align:right;top:649px;font-size:13.5px;color:#3a3a3a">0</div>
<div class="t" style="left:1191px;width:149px;text-align:right;top:649px;font-size:13.5px;color:#3a3a3a">25.000.000</div>
<div class="abs" style="left:18px;top:686px;width:16px;height:16px;border:1px solid #cdcdcd;border-radius:4px;background:#fff"></div>
<div class="t" style="left:171px;top:688px;font-size:13.5px;color:#3a3a3a">322TES</div>
<div class="t" style="left:301px;top:688px;font-size:13.3px;color:#3a3a3a">Top Easport</div>
<div class="t" style="left:531px;width:149px;text-align:right;top:688px;font-size:13.5px;color:#3a3a3a">26.900.000</div>
<div class="t" style="left:641px;width:149px;text-align:right;top:688px;font-size:13.5px;color:#3a3a3a">0</div>
<div class="t" style="left:751px;width:149px;text-align:right;top:688px;font-size:13.5px;color:#3a3a3a">0</div>
<div class="t" style="left:861px;width:149px;text-align:right;top:688px;font-size:13.5px;color:#3a3a3a">0</div>
<div class="t" style="left:971px;width:149px;text-align:right;top:688px;font-size:13.5px;color:#3a3a3a">0</div>
<div class="t" style="left:1081px;width:149px;text-align:right;top:688px;font-size:13.5px;color:#3a3a3a">1.500.000</div>
<div class="t" style="left:1191px;width:149px;text-align:right;top:688px;font-size:13.5px;color:#3a3a3a">25.000.000</div>
<div class="abs" style="left:1432px;top:703px;width:10px;height:8px;background:#fff"></div>
<div class="abs" style="left:0;top:703px;width:1433px;height:8px;border-radius:0 4px 4px 0;background:#efefef"></div>
<div class="abs" style="left:691px;top:703px;width:342px;height:8px;border-radius:4px;background:#a9a9a9"></div>
<div class="abs" style="left:1433px;top:89px;width:7px;height:614px;border-radius:0 0 4px 4px;background:#efefef"></div>
<div class="abs" style="left:1433px;top:89px;width:7px;height:142px;border-radius:4px;background:#a9a9a9"></div>
<div class="abs" style="left:0;top:711px;width:1440px;height:33px;background:#d9e0eb;border-bottom:1px solid #c9cfdb"></div>
<div class="abs" style="left:49px;top:711px;width:1px;height:32px;background:#ccd3e0"></div>
<div class="abs" style="left:159px;top:711px;width:1px;height:32px;background:#ccd3e0"></div>
<div class="abs" style="left:289px;top:711px;width:1px;height:32px;background:#ccd3e0"></div>
<div class="abs" style="left:469px;top:711px;width:1px;height:32px;background:#ccd3e0"></div>
<div class="abs" style="left:579px;top:711px;width:1px;height:32px;background:#ccd3e0"></div>
<div class="abs" style="left:690px;top:711px;width:1px;height:32px;background:#ccd3e0"></div>
<div class="abs" style="left:800px;top:711px;width:1px;height:32px;background:#ccd3e0"></div>
<div class="abs" style="left:910px;top:711px;width:1px;height:32px;background:#ccd3e0"></div>
<div class="abs" style="left:1020px;top:711px;width:1px;height:32px;background:#ccd3e0"></div>
<div class="abs" style="left:1130px;top:711px;width:1px;height:32px;background:#ccd3e0"></div>
<div class="abs" style="left:1240px;top:711px;width:1px;height:32px;background:#ccd3e0"></div>
<div class="abs" style="left:1350px;top:711px;width:1px;height:32px;background:#ccd3e0"></div>
<div class="t" style="left:300px;top:727-7px;top:721px;font-size:13.6px;color:#333">Tổng: <span class="sb">68</span> học sinh</div>
<div class="t sb" style="left:531px;width:148px;text-align:right;top:721px;font-size:13.4px;color:#2a2a2a">7.868.700.000</div>
<div class="t sb" style="left:641px;width:148px;text-align:right;top:721px;font-size:13.4px;color:#2a2a2a">1.275.000.000</div>
<div class="t sb" style="left:751px;width:148px;text-align:right;top:721px;font-size:13.4px;color:#2a2a2a">0</div>
<div class="t sb" style="left:861px;width:148px;text-align:right;top:721px;font-size:13.4px;color:#2a2a2a">4.875.000.000</div>
<div class="t sb" style="left:971px;width:148px;text-align:right;top:721px;font-size:13.4px;color:#2a2a2a">0</div>
<div class="t sb" style="left:1081px;width:148px;text-align:right;top:721px;font-size:13.4px;color:#2a2a2a">4.500.000</div>
<div class="t sb" style="left:1191px;width:148px;text-align:right;top:721px;font-size:13.4px;color:#2a2a2a">1.700.000.000</div>
</div>
<div class="abs" style="left:1903px;top:471px;width:14px;height:31px;border-radius:5px 0 0 5px;background:#1a6ee6"></div>
<svg class="abs" style="left:1903px;top:471px" width="14" height="31" viewBox="0 0 14 31"><path d="M10 11 L6 15.5 L10 20" fill="none" stroke="#fff" stroke-width="2"/></svg>
<div class="abs" style="left:1916px;top:0;width:2px;height:967px;background:#a4a4a4"></div>
<div class="abs" style="left:466px;top:927px;width:230px;height:32px;border:1px solid #dcdcdc;border-radius:4px;background:#fff"></div>
<div class="t" style="left:477px;top:937px;font-size:13.2px;color:#222">Thành tiền/Đơn giá = Số lượng</div>
<svg class="abs" style="left:675px;top:938px" width="12" height="9" viewBox="0 0 12 9"><path d="M1.5 2 L6 6.5 L10.5 2" fill="none" stroke="#333" stroke-width="1.6"/></svg>
<div class="abs" style="left:712px;top:927px;width:200px;height:31px;border:1px solid #dcdcdc;border-radius:4px;background:#fff"></div>
<div class="abs" style="left:1707px;top:927px;width:96px;height:32px;border:1px solid #d8d8d8;border-radius:4px;background:#fff"></div>
<div class="t" style="left:1707px;width:96px;text-align:center;top:937px;font-size:13.2px;color:#222">Quay lại</div>
<div class="abs" style="left:1811px;top:927px;width:96px;height:32px;border-radius:4px;background:#efefef"></div>
<div class="t" style="left:1811px;width:96px;text-align:center;top:937px;font-size:13.2px;color:#9a9a9a">Lưu</div></body></html>
